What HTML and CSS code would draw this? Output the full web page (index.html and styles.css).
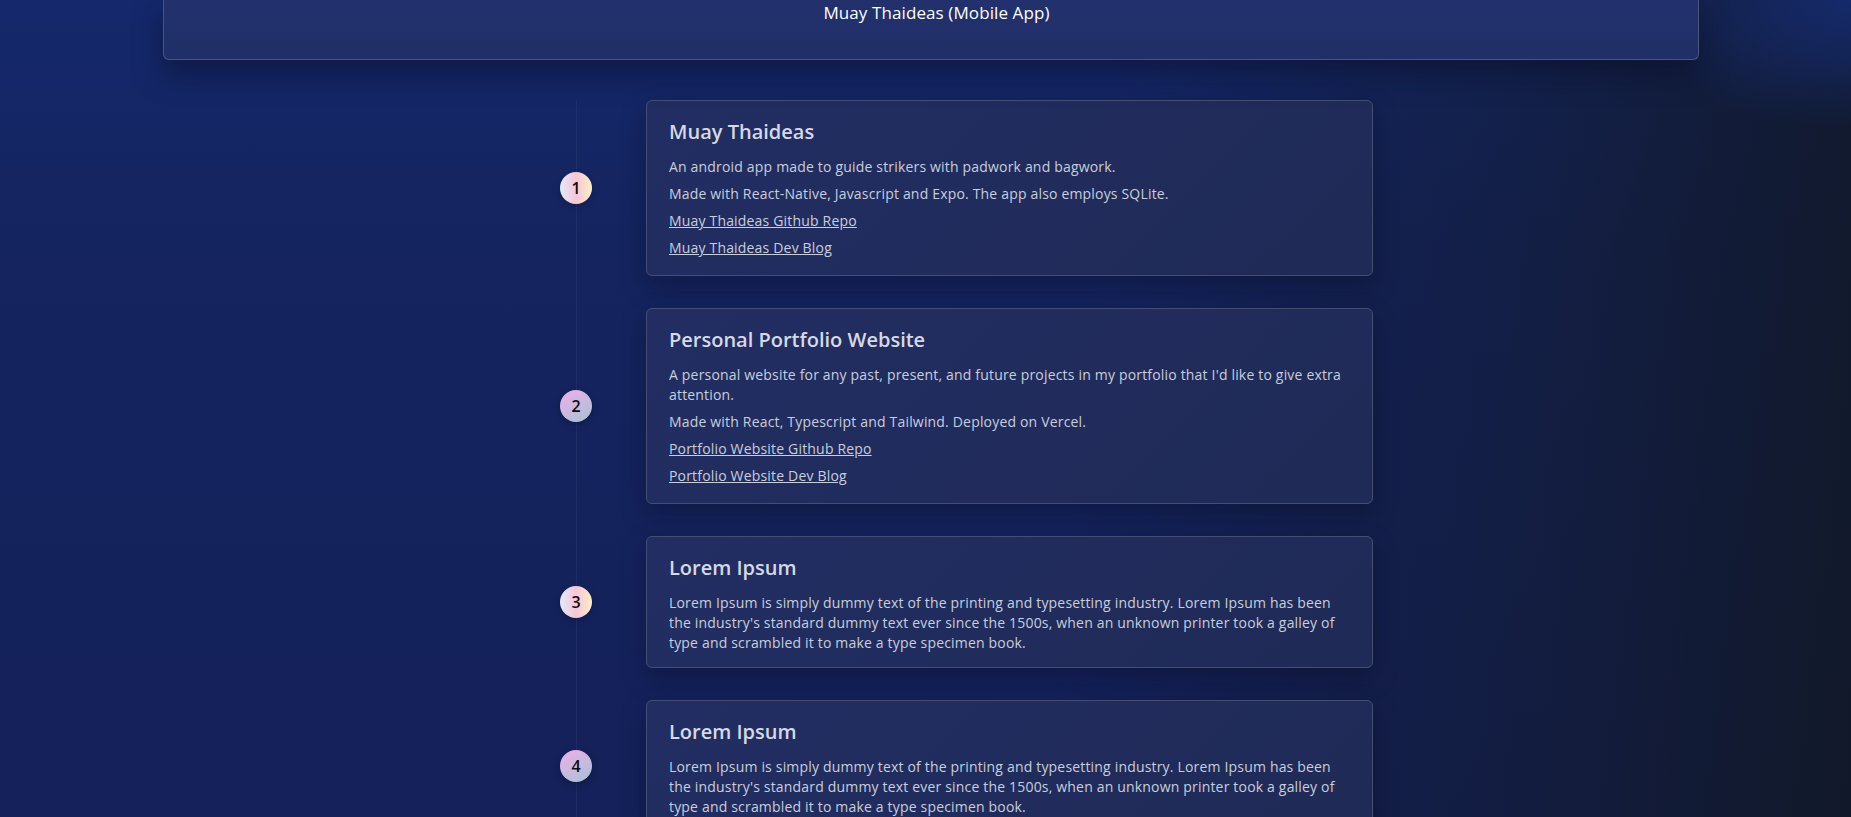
FILE: index.html
```html
<!DOCTYPE html>
<html lang="en">
<head>
<meta charset="utf-8">
<title>Projects</title>
<link rel="stylesheet" href="styles.css">
</head>
<body>
  <header class="project-header">
    <h1 class="project-header__title">Muay Thaideas (Mobile App)</h1>
  </header>

  <ol class="timeline">
    <li class="timeline__item">
      <span class="badge badge--warm">1</span>
      <article class="card">
        <h2 class="card__title">Muay Thaideas</h2>
        <p class="card__text">An android app made to guide strikers with padwork and bagwork.</p>
        <p class="card__text">Made with React-Native, Javascript and Expo. The app also employs SQLite.</p>
        <div class="card__links">
          <p class="card__text"><a href="#" class="card__link">Muay Thaideas Github Repo</a></p>
          <p class="card__text"><a href="#" class="card__link">Muay Thaideas Dev Blog</a></p>
        </div>
      </article>
    </li>

    <li class="timeline__item">
      <span class="badge badge--cool">2</span>
      <article class="card">
        <h2 class="card__title">Personal Portfolio Website</h2>
        <p class="card__text">A personal website for any past, present, and future projects in my portfolio that I'd like to give extra attention.</p>
        <p class="card__text">Made with React, Typescript and Tailwind. Deployed on Vercel.</p>
        <div class="card__links">
          <p class="card__text"><a href="#" class="card__link">Portfolio Website Github Repo</a></p>
          <p class="card__text"><a href="#" class="card__link">Portfolio Website Dev Blog</a></p>
        </div>
      </article>
    </li>

    <li class="timeline__item">
      <span class="badge badge--warm">3</span>
      <article class="card">
        <h2 class="card__title">Lorem Ipsum</h2>
        <p class="card__text">Lorem Ipsum is simply dummy text of the printing and typesetting industry. Lorem Ipsum has been the industry's standard dummy text ever since the 1500s, when an unknown printer took a galley of type and scrambled it to make a type specimen book.</p>
      </article>
    </li>

    <li class="timeline__item">
      <span class="badge badge--cool">4</span>
      <article class="card">
        <h2 class="card__title">Lorem Ipsum</h2>
        <p class="card__text">Lorem Ipsum is simply dummy text of the printing and typesetting industry. Lorem Ipsum has been the industry's standard dummy text ever since the 1500s, when an unknown printer took a galley of type and scrambled it to make a type specimen book.</p>
      </article>
    </li>
  </ol>
</body>
</html>
```

FILE: styles.css
```css
* {
  box-sizing: border-box;
}

html,
body {
  margin: 0;
  height: 100%;
  overflow: hidden;
}

html {
  background: #13204f;
}

body {
  font-family: "Open Sans", "Noto Sans", "DejaVu Sans", sans-serif;
  color: #c9cedd;
  background:
    radial-gradient(ellipse 220px 130px at 100% 0%, rgba(21, 42, 108, 1) 0%, rgba(21, 42, 108, 0.6) 45%, rgba(21, 42, 108, 0) 100%),
    linear-gradient(95deg, rgba(17, 24, 39, 0) 0%, rgba(17, 24, 39, 0) 58%, rgba(17, 24, 39, 0.45) 80%, rgba(17, 24, 39, 0.95) 100%),
    linear-gradient(180deg, #14286b 0%, #14245f 30%, #14215a 100%);
}

/* Header (page scrolled so only its lower part shows) */
.project-header {
  margin-left: 163px;
  width: 1536px;
  height: 60px;
  padding: 1px 0 0 11px;
  text-align: center;
  background: linear-gradient(180deg, #22306d 0%, #212f68 100%);
  border: 1px solid #4a5579;
  border-top: 0;
  border-radius: 0 0 6px 6px;
  box-shadow: 0 14px 28px rgba(8, 14, 38, 0.5);
  position: relative;
  z-index: 2;
}

.project-header__title {
  margin: 0;
  font-size: 17px;
  font-weight: 400;
  line-height: 24px;
  letter-spacing: 0.1px;
  color: #ffffff;
}

/* Timeline */
.timeline {
  list-style: none;
  margin: 40px 0 0 560px;
  padding: 0;
  width: 813px;
  position: relative;
  display: flex;
  flex-direction: column;
  gap: 32px;
}

.timeline::before {
  content: "";
  position: absolute;
  left: 16px;
  top: 0;
  bottom: -400px;
  width: 1px;
  background: rgba(148, 163, 184, 0.09);
}

.timeline__item {
  display: flex;
  align-items: center;
  gap: 54px;
}

.badge {
  flex: none;
  width: 32px;
  height: 32px;
  border-radius: 50%;
  display: flex;
  align-items: center;
  justify-content: center;
  font-size: 16px;
  font-weight: 600;
  color: #0b0b10;
  position: relative;
  z-index: 1;
  box-shadow: 0 2px 6px rgba(0, 0, 0, 0.25);
}

.badge--warm {
  background: linear-gradient(90deg, #e3e9fc 0%, #f6c6d6 50%, #fdeec4 100%);
}

.badge--cool {
  background: linear-gradient(150deg, #f0aeea 0%, #cbb9e0 50%, #a3c2d4 100%);
}

/* Cards */
.card {
  flex: none;
  width: 727px;
  padding: 17px 20px 14px 22px;
  border: 1px solid #444e72;
  border-radius: 6px;
  background: linear-gradient(135deg, #222e63 0%, #1f2a56 100%);
  box-shadow: 0 10px 24px rgba(6, 10, 30, 0.35);
}

.card__title {
  margin: 0 0 11px;
  font-size: 20px;
  font-weight: 600;
  line-height: 28px;
  color: #d6d9e3;
}

.card__text {
  margin: 7px 0 0;
  font-size: 14px;
  line-height: 20px;
  letter-spacing: 0.18px;
}

.card__title + .card__text {
  margin-top: 0;
}

.card__links {
  padding-bottom: 3px;
}

.card__link {
  color: inherit;
  text-decoration: underline;
}
```
